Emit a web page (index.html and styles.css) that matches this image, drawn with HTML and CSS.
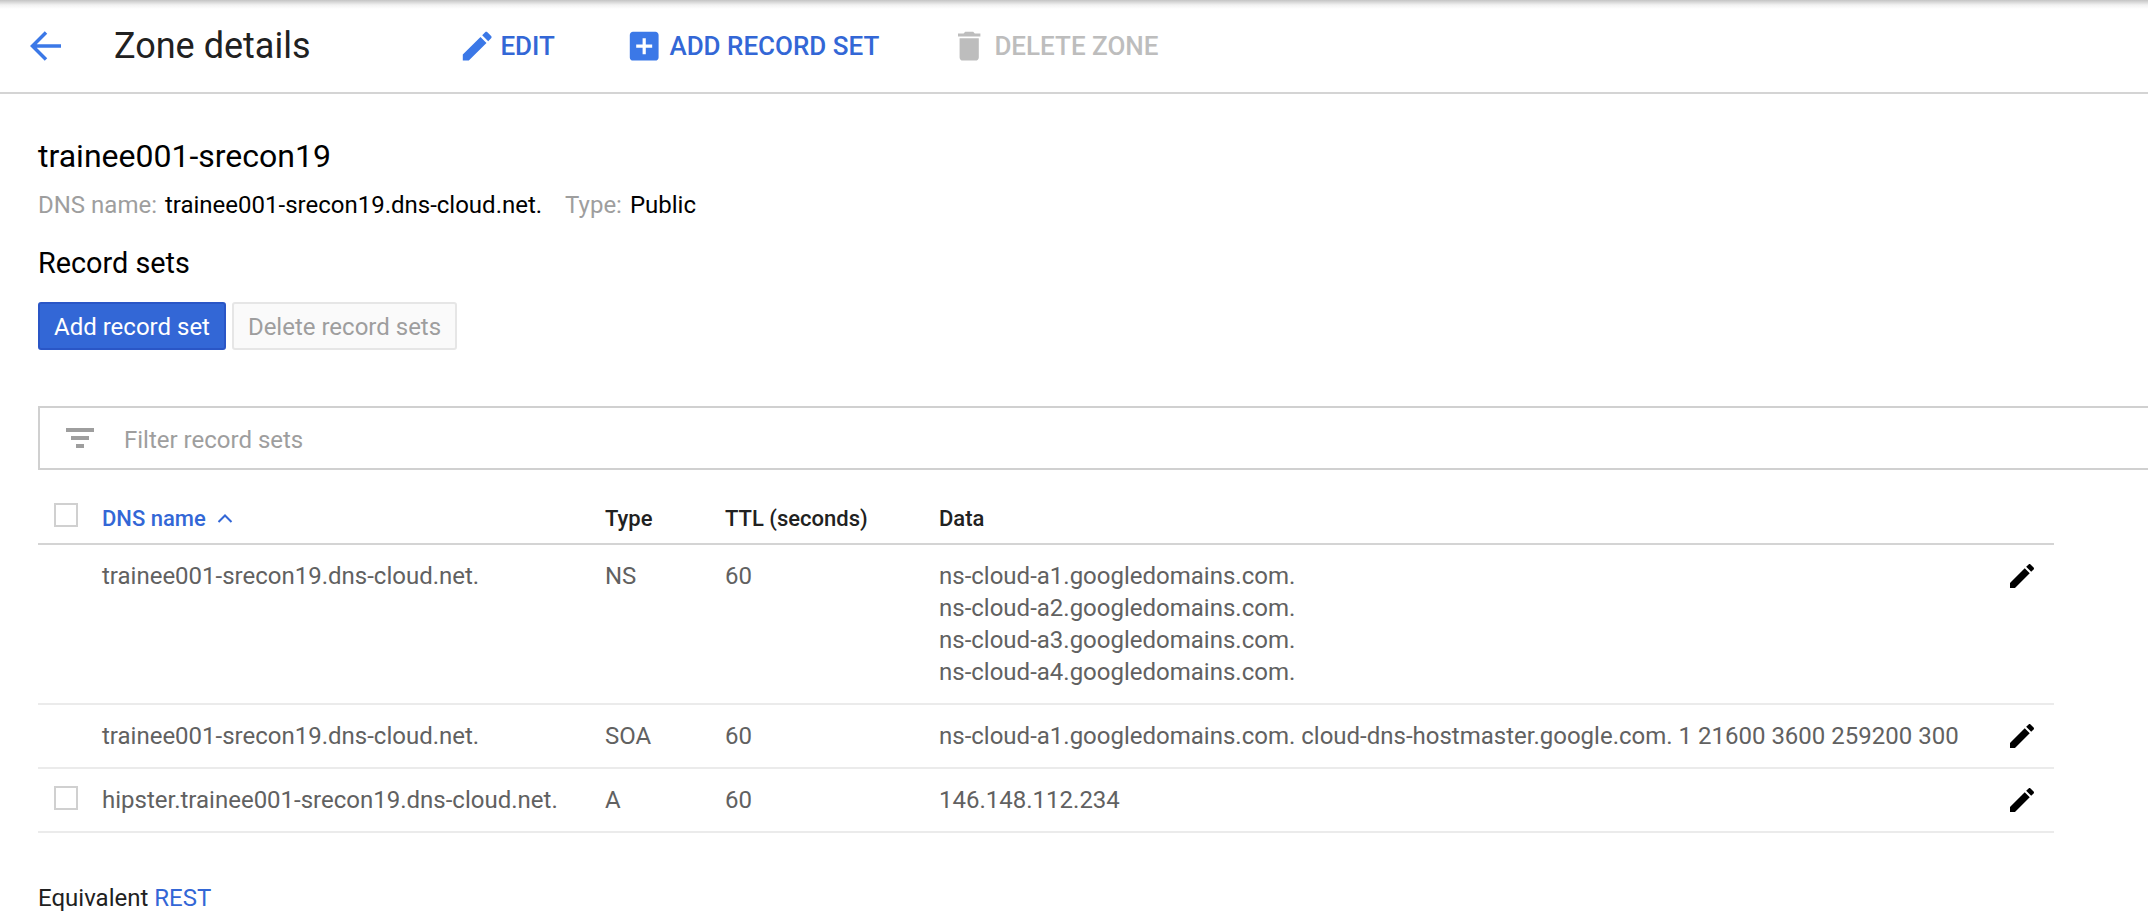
FILE: index.html
```html
<!DOCTYPE html>
<html>
<head>
    <title>Zone details</title>
    <link rel="stylesheet" href="styles.css">
</head>
<body>
    <div class="toolbar">
        <svg class="back-icon" viewBox="0 0 32 30"><path d="M31 15H3M16 1.500L2.500 15 16 28.500"/></svg>
        <h1 class="page-title">Zone details</h1>
        <div class="action action-edit">
            <svg class="icon" viewBox="0 0 24 24"><path d="M3 17.250V21h3.750L17.810 9.940l-3.750-3.750L3 17.250zM20.710 7.040c.39-.39.39-1.020 0-1.410l-2.340-2.340c-.39-.39-1.020-.39-1.410 0l-1.830 1.830 3.750 3.750 1.830-1.830z"/></svg>
            <span>EDIT</span>
        </div>
        <div class="action action-add">
            <svg class="icon" viewBox="0 0 24 24"><path d="M19 3H5c-1.110 0-2 .9-2 2v14c0 1.100.89 2 2 2h14c1.100 0 2-.9 2-2V5c0-1.100-.9-2-2-2zm-2 10h-4v4h-2v-4H7v-2h4V7h2v4h4v2z"/></svg>
            <span>ADD RECORD SET</span>
        </div>
        <div class="action action-delete">
            <svg class="icon" viewBox="0 0 24 24"><path d="M6 19c0 1.100.9 2 2 2h8c1.100 0 2-.9 2-2V7H6v12zM19 4h-3.500l-1-1h-5l-1 1H5v2h14V4z"/></svg>
            <span>DELETE ZONE</span>
        </div>
    </div>

    <div class="content">
        <h2 class="zone-name">trainee001-srecon19</h2>
        <p class="zone-meta">
            <span class="meta-label">DNS name:</span> <span class="meta-value">trainee001-srecon19.dns-cloud.net.</span>
            <span class="meta-label meta-type">Type:</span> <span class="meta-value">Public</span>
        </p>
        <h3 class="section-title">Record sets</h3>
        <div class="buttons">
            <button class="btn btn-primary">Add record set</button>
            <button class="btn btn-disabled">Delete record sets</button>
        </div>

        <div class="filter">
            <svg class="filter-icon" viewBox="0 0 28 20"><path d="M0 0h28v4H0zM5 8h18v4H5zM10 16h8v4h-8z"/></svg>
            <span class="filter-text">Filter record sets</span>
        </div>

        <table class="records">
            <thead>
                <tr>
                    <th class="col-check"><span class="checkbox"></span></th>
                    <th class="col-name">
                        <span class="sorted">DNS name</span>
                        <svg class="sort-icon" viewBox="0 0 16 10"><path d="M1.500 9L8 2.500 14.500 9"/></svg>
                    </th>
                    <th class="col-type">Type</th>
                    <th class="col-ttl">TTL (seconds)</th>
                    <th class="col-data">Data</th>
                    <th class="col-edit"></th>
                </tr>
            </thead>
            <tbody>
                <tr>
                    <td></td>
                    <td>trainee001-srecon19.dns-cloud.net.</td>
                    <td>NS</td>
                    <td>60</td>
                    <td>ns-cloud-a1.googledomains.com.<br>ns-cloud-a2.googledomains.com.<br>ns-cloud-a3.googledomains.com.<br>ns-cloud-a4.googledomains.com.</td>
                    <td class="cell-edit"><svg class="row-edit" viewBox="0 0 24 24"><path d="M3 17.250V21h3.750L17.810 9.940l-3.750-3.750L3 17.250zM20.710 7.040c.39-.39.39-1.020 0-1.410l-2.340-2.340c-.39-.39-1.020-.39-1.410 0l-1.830 1.830 3.750 3.750 1.830-1.830z"/></svg></td>
                </tr>
                <tr>
                    <td></td>
                    <td>trainee001-srecon19.dns-cloud.net.</td>
                    <td>SOA</td>
                    <td>60</td>
                    <td>ns-cloud-a1.googledomains.com. cloud-dns-hostmaster.google.com. 1 21600 3600 259200 300</td>
                    <td class="cell-edit"><svg class="row-edit" viewBox="0 0 24 24"><path d="M3 17.250V21h3.750L17.810 9.940l-3.750-3.750L3 17.250zM20.710 7.040c.39-.39.39-1.020 0-1.410l-2.340-2.340c-.39-.39-1.020-.39-1.410 0l-1.830 1.830 3.750 3.750 1.830-1.830z"/></svg></td>
                </tr>
                <tr>
                    <td class="cell-check"><span class="checkbox"></span></td>
                    <td>hipster.trainee001-srecon19.dns-cloud.net.</td>
                    <td>A</td>
                    <td>60</td>
                    <td>146.148.112.234</td>
                    <td class="cell-edit"><svg class="row-edit" viewBox="0 0 24 24"><path d="M3 17.250V21h3.750L17.810 9.940l-3.750-3.750L3 17.250zM20.710 7.040c.39-.39.39-1.020 0-1.410l-2.340-2.340c-.39-.39-1.020-.39-1.410 0l-1.830 1.830 3.750 3.750 1.830-1.830z"/></svg></td>
                </tr>
            </tbody>
        </table>

        <p class="rest">Equivalent <span class="rest-link">REST</span></p>
    </div>
</body>
</html>
```

FILE: styles.css
```css
html, body {
    height: 912px;
    overflow: hidden;
}

body {
    margin: 0;
    font-family: Roboto, "Liberation Sans", sans-serif;
    font-size: 24px;
    color: #212121;
    background-color: #fff;
}

.toolbar {
    display: flex;
    align-items: center;
    height: 92px;
    box-sizing: content-box;
    border-bottom: 2px solid #d4d4d4;
    background: linear-gradient(#c4c4c4, #f2f2f2 5px, #fff 9px);
}

.back-icon {
    width: 32px;
    height: 30px;
    margin-left: 30px;
    fill: none;
    stroke: #3b78e7;
    stroke-width: 3.5;
}

.page-title {
    margin: 0 0 0 52px;
    width: 344px;
    font-size: 36px;
    font-weight: 400;
    color: #212121;
}

.action {
    display: flex;
    align-items: center;
    font-size: 26px;
    font-weight: 500;
    color: #3367d6;
}

.action-edit {
    width: 167px;
}

.action-add {
    width: 325px;
}

.action-delete {
    color: #bdbdbd;
}

.icon {
    width: 38.4px;
    height: 38.4px;
    margin-right: 6px;
    fill: #3b78e7;
}

.action-edit .icon {
    margin-right: 4px;
}

.action-delete .icon {
    fill: #bdbdbd;
}

.content {
    padding-left: 38px;
}

.zone-name {
    margin: 43px 0 0;
    font-size: 32px;
    line-height: 38px;
    font-weight: 400;
    color: #000;
}

.zone-meta {
    margin: 14px 0 0;
    line-height: 32px;
}

.meta-label {
    color: #9e9e9e;
}

.meta-value {
    color: #000;
    margin-left: 2px;
}

.meta-type {
    margin-left: 17px;
}

.section-title {
    margin: 25px 0 0;
    font-size: 28.8px;
    line-height: 34px;
    font-weight: 400;
    color: #000;
}

.buttons {
    display: flex;
    gap: 6px;
    margin-top: 22px;
}

.btn {
    height: 48px;
    padding: 1px 0 0;
    border-radius: 3px;
    font-family: inherit;
    font-size: 24px;
}

.btn-primary {
    width: 188px;
    border: 2px solid #2a56c6;
    background-color: #3367d6;
    color: #fff;
}

.btn-disabled {
    width: 225px;
    border: 2px solid #e6e6e6;
    background-color: #fafafa;
    color: #9e9e9e;
}

.filter {
    display: flex;
    align-items: center;
    box-sizing: border-box;
    width: 2200px;
    height: 64px;
    margin-top: 56px;
    border: 2px solid #d0d0d0;
}

.filter-icon {
    width: 28px;
    height: 20px;
    margin: 0 26px 0 26px;
    fill: #9e9e9e;
}

.filter-text {
    margin: 3px 0 0 4px;
    color: #9e9e9e;
}

.records {
    width: 2016px;
    margin-top: 24px;
    border-collapse: collapse;
    table-layout: fixed;
}

.records th {
    height: 49px;
    padding: 0;
    font-weight: 500;
    font-size: 22px;
    text-align: left;
    color: #212121;
    border-bottom: 2px solid #d4d4d4;
}

.records td {
    padding: 15px 0;
    line-height: 32px;
    color: #616161;
    vertical-align: top;
    border-bottom: 2px solid #ebebeb;
}

.col-check {
    width: 64px;
}

.col-name {
    width: 503px;
}

.col-type {
    width: 120px;
}

.col-ttl {
    width: 214px;
}

.col-data {
    width: 1041px;
}

.checkbox {
    display: block;
    box-sizing: border-box;
    width: 24px;
    height: 24px;
    margin-left: 16px;
    border: 2px solid #d0d0d0;
}

.col-check .checkbox {
    margin-top: -8px;
}

.cell-check .checkbox {
    margin-top: 2px;
}

.sorted {
    color: #3367d6;
}

.sort-icon {
    width: 16px;
    height: 10px;
    margin-left: 6px;
    fill: none;
    stroke: #3367d6;
    stroke-width: 2;
    vertical-align: 3px;
}

.records .cell-edit {
    padding: 15px 0 0;
}

.row-edit {
    display: block;
    width: 32px;
    height: 32px;
    margin-left: 26px;
    fill: #000;
}

.rest {
    margin: 50px 0 0;
    line-height: 30px;
}

.rest-link {
    color: #3367d6;
}
```
